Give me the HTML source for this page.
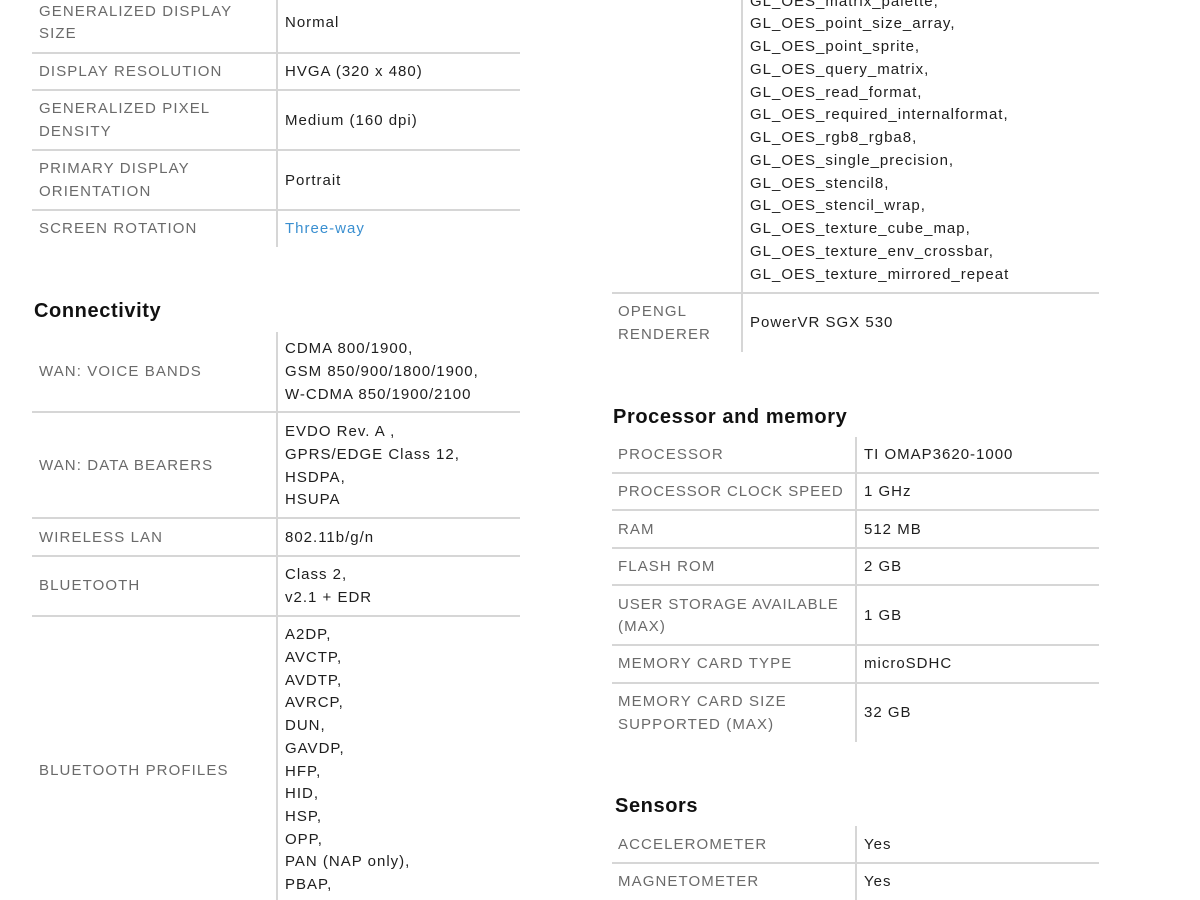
<!DOCTYPE html>
<html><head><meta charset="utf-8"><style>
body{margin:0;width:1200px;height:900px;overflow:hidden;background:#fff;position:relative;font-family:"Liberation Sans",Arial,sans-serif;font-size:15px}
.t{position:absolute;line-height:23px;white-space:nowrap}
.l{color:#6a6a6a;letter-spacing:1.1px}
.v{color:#1e1e1e;letter-spacing:1px}
.h{position:absolute;height:2px;background:#d6d6d6}
.w{position:absolute;width:2px;background:#d6d6d6}
.hd{position:absolute;font-weight:bold;font-size:20px;color:#111;line-height:24px;letter-spacing:.6px}
</style></head><body>
<div class="w" style="left:276px;top:0;height:247px"></div>
<div class="h" style="left:32px;width:488px;top:52px"></div>
<div class="h" style="left:32px;width:488px;top:89px"></div>
<div class="h" style="left:32px;width:488px;top:149px"></div>
<div class="h" style="left:32px;width:488px;top:209px"></div>
<div class="t l" style="left:39px;top:0px">GENERALIZED DISPLAY</div>
<div class="t l" style="left:39px;top:22px">SIZE</div>
<div class="t v" style="left:285px;top:11px">Normal</div>
<div class="t l" style="left:39px;top:60px">DISPLAY RESOLUTION</div>
<div class="t v" style="left:285px;top:60px">HVGA (320 x 480)</div>
<div class="t l" style="left:39px;top:97px">GENERALIZED PIXEL</div>
<div class="t l" style="left:39px;top:120px">DENSITY</div>
<div class="t v" style="left:285px;top:109px">Medium (160 dpi)</div>
<div class="t l" style="left:39px;top:157px">PRIMARY DISPLAY</div>
<div class="t l" style="left:39px;top:180px">ORIENTATION</div>
<div class="t v" style="left:285px;top:169px">Portrait</div>
<div class="t l" style="left:39px;top:217px">SCREEN ROTATION</div>
<div class="t v" style="left:285px;top:217px;color:#3a8fd0">Three-way</div>

<div class="hd" style="left:34px;top:299px">Connectivity</div>
<div class="w" style="left:276px;top:332px;height:568px"></div>
<div class="h" style="left:32px;width:488px;top:411px"></div>
<div class="h" style="left:32px;width:488px;top:517px"></div>
<div class="h" style="left:32px;width:488px;top:555px"></div>
<div class="h" style="left:32px;width:488px;top:615px"></div>
<div class="t l" style="left:39px;top:360px">WAN: VOICE BANDS</div>
<div class="t v" style="left:285px;top:337px">CDMA 800/1900,</div>
<div class="t v" style="left:285px;top:360px">GSM 850/900/1800/1900,</div>
<div class="t v" style="left:285px;top:383px">W-CDMA 850/1900/2100</div>
<div class="t l" style="left:39px;top:454px">WAN: DATA BEARERS</div>
<div class="t v" style="left:285px;top:420px">EVDO Rev. A ,</div>
<div class="t v" style="left:285px;top:443px">GPRS/EDGE Class 12,</div>
<div class="t v" style="left:285px;top:466px">HSDPA,</div>
<div class="t v" style="left:285px;top:488px">HSUPA</div>
<div class="t l" style="left:39px;top:526px">WIRELESS LAN</div>
<div class="t v" style="left:285px;top:526px">802.11b/g/n</div>
<div class="t l" style="left:39px;top:574px">BLUETOOTH</div>
<div class="t v" style="left:285px;top:563px">Class 2,</div>
<div class="t v" style="left:285px;top:586px">v2.1 + EDR</div>
<div class="t l" style="left:39px;top:759px">BLUETOOTH PROFILES</div>
<div class="t v" style="left:285px;top:623px">A2DP,</div>
<div class="t v" style="left:285px;top:646px">AVCTP,</div>
<div class="t v" style="left:285px;top:669px">AVDTP,</div>
<div class="t v" style="left:285px;top:691px">AVRCP,</div>
<div class="t v" style="left:285px;top:714px">DUN,</div>
<div class="t v" style="left:285px;top:737px">GAVDP,</div>
<div class="t v" style="left:285px;top:760px">HFP,</div>
<div class="t v" style="left:285px;top:782px">HID,</div>
<div class="t v" style="left:285px;top:805px">HSP,</div>
<div class="t v" style="left:285px;top:828px">OPP,</div>
<div class="t v" style="left:285px;top:850px">PAN (NAP only),</div>
<div class="t v" style="left:285px;top:873px">PBAP,</div>

<div class="w" style="left:741px;top:0;height:352px"></div>
<div class="h" style="left:612px;width:487px;top:292px"></div>
<div class="t v" style="left:750px;top:-10px">GL_OES_matrix_palette,</div>
<div class="t v" style="left:750px;top:12px">GL_OES_point_size_array,</div>
<div class="t v" style="left:750px;top:35px">GL_OES_point_sprite,</div>
<div class="t v" style="left:750px;top:58px">GL_OES_query_matrix,</div>
<div class="t v" style="left:750px;top:81px">GL_OES_read_format,</div>
<div class="t v" style="left:750px;top:103px">GL_OES_required_internalformat,</div>
<div class="t v" style="left:750px;top:126px">GL_OES_rgb8_rgba8,</div>
<div class="t v" style="left:750px;top:149px">GL_OES_single_precision,</div>
<div class="t v" style="left:750px;top:172px">GL_OES_stencil8,</div>
<div class="t v" style="left:750px;top:194px">GL_OES_stencil_wrap,</div>
<div class="t v" style="left:750px;top:217px">GL_OES_texture_cube_map,</div>
<div class="t v" style="left:750px;top:240px">GL_OES_texture_env_crossbar,</div>
<div class="t v" style="left:750px;top:263px">GL_OES_texture_mirrored_repeat</div>
<div class="t l" style="left:618px;top:300px">OPENGL</div>
<div class="t l" style="left:618px;top:323px">RENDERER</div>
<div class="t v" style="left:750px;top:311px">PowerVR SGX 530</div>

<div class="hd" style="left:613px;top:405px">Processor and memory</div>
<div class="w" style="left:855px;top:437px;height:305px"></div>
<div class="h" style="left:612px;width:487px;top:472px"></div>
<div class="h" style="left:612px;width:487px;top:509px"></div>
<div class="h" style="left:612px;width:487px;top:547px"></div>
<div class="h" style="left:612px;width:487px;top:584px"></div>
<div class="h" style="left:612px;width:487px;top:644px"></div>
<div class="h" style="left:612px;width:487px;top:682px"></div>
<div class="t l" style="left:618px;top:443px">PROCESSOR</div>
<div class="t v" style="left:864px;top:443px">TI OMAP3620-1000</div>
<div class="t l" style="left:618px;top:480px;letter-spacing:.9px">PROCESSOR CLOCK SPEED</div>
<div class="t v" style="left:864px;top:480px">1 GHz</div>
<div class="t l" style="left:618px;top:518px">RAM</div>
<div class="t v" style="left:864px;top:518px">512 MB</div>
<div class="t l" style="left:618px;top:555px">FLASH ROM</div>
<div class="t v" style="left:864px;top:555px">2 GB</div>
<div class="t l" style="left:618px;top:593px;letter-spacing:.9px">USER STORAGE AVAILABLE</div>
<div class="t l" style="left:618px;top:615px">(MAX)</div>
<div class="t v" style="left:864px;top:604px">1 GB</div>
<div class="t l" style="left:618px;top:652px">MEMORY CARD TYPE</div>
<div class="t v" style="left:864px;top:652px">microSDHC</div>
<div class="t l" style="left:618px;top:690px">MEMORY CARD SIZE</div>
<div class="t l" style="left:618px;top:713px">SUPPORTED (MAX)</div>
<div class="t v" style="left:864px;top:701px">32 GB</div>

<div class="hd" style="left:615px;top:794px">Sensors</div>
<div class="w" style="left:855px;top:826px;height:74px"></div>
<div class="h" style="left:612px;width:487px;top:862px"></div>
<div class="t l" style="left:618px;top:833px">ACCELEROMETER</div>
<div class="t v" style="left:864px;top:833px">Yes</div>
<div class="t l" style="left:618px;top:870px">MAGNETOMETER</div>
<div class="t v" style="left:864px;top:870px">Yes</div>
</body></html>
